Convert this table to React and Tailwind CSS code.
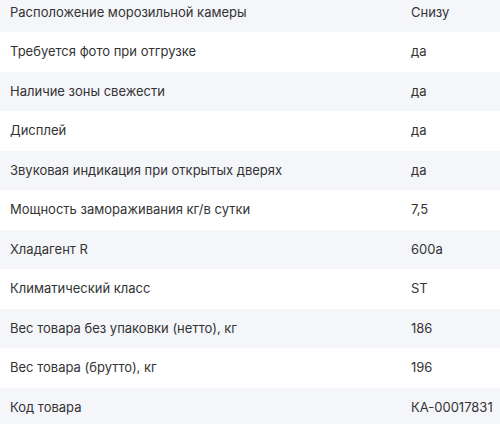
const rows = [
  ["Расположение морозильной камеры", "Снизу"],
  ["Требуется фото при отгрузке", "да"],
  ["Наличие зоны свежести", "да"],
  ["Дисплей", "да"],
  ["Звуковая индикация при открытых дверях", "да"],
  ["Мощность замораживания кг/в сутки", "7,5"],
  ["Хладагент R", "600a"],
  ["Климатический класс", "ST"],
  ["Вес товара без упаковки (нетто), кг", "186"],
  ["Вес товара (брутто), кг", "196"],
  ["Код товара", "КА-00017831"],
];

export default function App() {
  return (
    <div className="h-[424px] w-[500px] overflow-hidden bg-white font-['Inter',sans-serif] text-[13px] text-[#333]">
      <div className="-mt-[7.5px]">
        {rows.map(([label, value], i) => (
          <div
            key={label}
            className={`flex h-[39.5px] items-center ${i % 2 === 0 ? "bg-[#f5f6fa]" : "bg-white"}`}
          >
            <div className="w-[411px] pl-[10px]">{label}</div>
            <div>{value}</div>
          </div>
        ))}
      </div>
    </div>
  );
}
